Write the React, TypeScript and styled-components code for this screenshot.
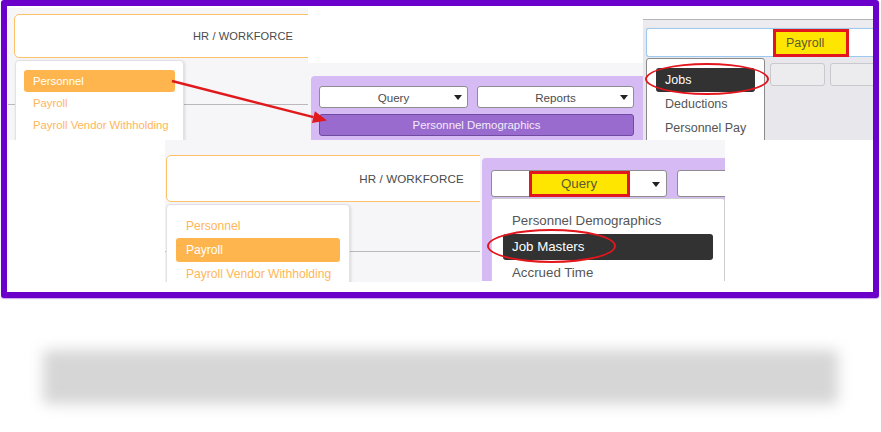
import React from "react";
import styled, { createGlobalStyle } from "styled-components";

const GlobalStyle = createGlobalStyle`
  html, body { margin: 0; padding: 0; background: #ffffff; }
  body { font-family: "Liberation Sans", Arial, sans-serif; }
  * { box-sizing: border-box; }
`;

const Page = styled.div`
  width: 881px;
  height: 432px;
  display: flex;
  flex-direction: column;
  padding-left: 1px;
`;

const Frame = styled.div`
  width: 878px;
  height: 298px;
  border: 6px solid #6a00c9;
  border-radius: 3px;
  background: #ffffff;
  box-shadow: 0 1px 1px rgba(106, 0, 201, 0.35);
`;

const Canvas = styled.div`
  position: relative;
  width: 100%;
  height: 100%;
  overflow: hidden;
`;

const Shot = styled.div<{ $x: number; $y: number; $w: number; $h: number; $bg?: string }>`
  position: absolute;
  left: ${(p) => p.$x}px;
  top: ${(p) => p.$y}px;
  width: ${(p) => p.$w}px;
  height: ${(p) => p.$h}px;
  background: ${(p) => p.$bg || "#f6f5f8"};
  overflow: hidden;
  display: flex;
  flex-direction: column;
`;

/* ---------- HR header / orange menu ---------- */

const HeaderBox = styled.div<{ $w: number; $h: number; $ml: number; $mt: number; $fs: number }>`
  flex: none;
  width: ${(p) => p.$w}px;
  height: ${(p) => p.$h}px;
  margin: ${(p) => p.$mt}px 0 0 ${(p) => p.$ml}px;
  border: 1.5px solid #ffc06a;
  border-radius: 5px;
  background: #ffffff;
  display: flex;
  align-items: center;
  justify-content: center;
  font-size: ${(p) => p.$fs}px;
  color: #4a4a4a;
  letter-spacing: 0.1px;
`;

const Rule = styled.div<{ $mt: number }>`
  flex: none;
  height: 1px;
  margin-top: ${(p) => p.$mt}px;
  background: #b9b8bc;
`;

const OrangeMenu = styled.div<{ $x: number; $y: number; $w: number; $pad: number }>`
  position: absolute;
  left: ${(p) => p.$x}px;
  top: ${(p) => p.$y}px;
  width: ${(p) => p.$w}px;
  height: 140px;
  background: #ffffff;
  border: 1px solid #e2e1e5;
  border-radius: 4px;
  box-shadow: 1px 1px 3px rgba(0, 0, 0, 0.12);
  padding: 9px ${(p) => p.$pad}px;
  display: flex;
  flex-direction: column;
`;

const OrangeItem = styled.div<{ $active?: boolean; $h: number; $fs: number; $pl: number }>`
  height: ${(p) => p.$h}px;
  line-height: ${(p) => p.$h}px;
  padding-left: ${(p) => p.$pl}px;
  border-radius: 3px;
  font-size: ${(p) => p.$fs}px;
  white-space: nowrap;
  color: ${(p) => (p.$active ? "#ffffff" : "#ffb657")};
  background: ${(p) => (p.$active ? "#ffb54d" : "transparent")};
`;

/* ---------- purple panel ---------- */

const WhiteTop = styled.div<{ $h: number }>`
  flex: none;
  height: ${(p) => p.$h}px;
  background: #ffffff;
`;

const GrayArea = styled.div<{ $pt: number; $pl: number }>`
  flex: 1;
  display: flex;
  flex-direction: column;
  padding: ${(p) => p.$pt}px 0 0 ${(p) => p.$pl}px;
  background: #f6f5f8;
`;

const Panel = styled.div<{ $pt: number; $pl: number }>`
  flex: 1;
  position: relative;
  background: #d6baf3;
  border-top-left-radius: 4px;
  padding: ${(p) => p.$pt}px 0 0 ${(p) => p.$pl}px;
  display: flex;
  flex-direction: column;
`;

const SelectRow = styled.div<{ $gap: number }>`
  display: flex;
  gap: ${(p) => p.$gap}px;
`;

const Select = styled.div<{ $w: number; $h: number; $fs: number }>`
  position: relative;
  flex: none;
  width: ${(p) => p.$w}px;
  height: ${(p) => p.$h}px;
  background: #ffffff;
  border: 1px solid #8d8d8f;
  border-radius: 3px;
  display: flex;
  align-items: center;
  justify-content: center;
  font-size: ${(p) => p.$fs}px;
  color: #4d4d4d;
`;

const Caret = styled.span<{ $r: number }>`
  position: absolute;
  right: ${(p) => p.$r}px;
  top: 50%;
  margin-top: -2px;
  width: 0;
  height: 0;
  border-left: 4px solid transparent;
  border-right: 4px solid transparent;
  border-top: 5px solid #222;
`;

const PurpleButton = styled.div`
  margin-top: 6px;
  width: 315px;
  height: 22px;
  background: #9a6bcf;
  border: 1px solid #6f4aa0;
  border-radius: 3px;
  display: flex;
  align-items: center;
  justify-content: center;
  font-size: 11.4px;
  color: #f3ecfb;
`;

const YellowMark = styled.div<{ $w: number; $h: number; $ml?: number; $fs: number; $center?: boolean }>`
  flex: none;
  width: ${(p) => p.$w}px;
  height: ${(p) => p.$h}px;
  margin-left: ${(p) => p.$ml || 0}px;
  background: #ffe600;
  border: 3px solid #e3161d;
  display: flex;
  align-items: center;
  justify-content: ${(p) => (p.$center ? "center" : "flex-start")};
  padding-left: ${(p) => (p.$center ? 0 : 10)}px;
  font-size: ${(p) => p.$fs}px;
  color: #5a5a30;
`;

/* ---------- dark menus ---------- */

const DarkMenu = styled.div<{ $x: number; $y: number; $w: number; $px: number; $border: string }>`
  position: absolute;
  left: ${(p) => p.$x}px;
  top: ${(p) => p.$y}px;
  width: ${(p) => p.$w}px;
  height: 140px;
  background: #ffffff;
  border: 1px solid ${(p) => p.$border};
  border-radius: 3px;
  padding: 9px ${(p) => p.$px}px;
  display: flex;
  flex-direction: column;
`;

const DarkItem = styled.div<{ $active?: boolean; $h: number; $fs: number }>`
  height: ${(p) => p.$h}px;
  line-height: ${(p) => p.$h}px;
  padding-left: 9px;
  border-radius: 3px;
  font-size: ${(p) => p.$fs}px;
  white-space: nowrap;
  color: ${(p) => (p.$active ? "#ffffff" : "#555555")};
  background: ${(p) => (p.$active ? "#323232" : "transparent")};
`;

const Ellipse = styled.div<{ $x: number; $y: number; $w: number; $h: number }>`
  position: absolute;
  left: ${(p) => p.$x}px;
  top: ${(p) => p.$y}px;
  width: ${(p) => p.$w}px;
  height: ${(p) => p.$h}px;
  border: 2.5px solid #e2161c;
  border-radius: 50%;
  pointer-events: none;
`;

/* ---------- payroll tab screenshot ---------- */

const TabStrip = styled.div`
  flex: none;
  height: 8px;
  margin-top: 11px;
  background: #ececf0;
  border-top: 1px solid #b4b4b8;
`;

const TabBody = styled.div`
  flex: 1;
  background: #e8e7eb;
  display: flex;
  flex-direction: column;
  padding-left: 3px;
`;

const InputBar = styled.div`
  flex: none;
  height: 29px;
  margin-top: 1px;
  background: #ffffff;
  border: 1px solid #9dc9ee;
  border-right: none;
  border-radius: 3px 0 0 3px;
  display: flex;
  align-items: center;
`;

const GhostRow = styled.div`
  display: flex;
  gap: 5px;
  margin: 6px 0 0 124px;
`;

const GhostButton = styled.div<{ $w: number }>`
  flex: none;
  width: ${(p) => p.$w}px;
  height: 23px;
  background: #ececef;
  border: 1px solid #c9c9cd;
  border-radius: 3px;
`;

const Arrow = styled.svg`
  position: absolute;
  left: 0;
  top: 0;
  width: 866px;
  height: 286px;
  pointer-events: none;
`;

const BlurBar = styled.div`
  margin: 52px 0 0 42px;
  width: 795px;
  height: 54px;
  background: #d6d6d6;
  border-radius: 4px;
  filter: blur(7px);
`;

export default function App() {
  return (
    <>
      <GlobalStyle />
      <Page>
        <Frame>
          <Canvas>
            {/* top-left: HR / WORKFORCE with Personnel selected */}
            <Shot $x={1} $y={2} $w={300} $h={132}>
              <HeaderBox $w={458} $h={44} $ml={6} $mt={6} $fs={11.1}>
                HR / WORKFORCE
              </HeaderBox>
              <Rule $mt={46} />
              <OrangeMenu $x={7} $y={52} $w={169} $pad={8}>
                <OrangeItem $active $h={22} $fs={11.3} $pl={9}>Personnel</OrangeItem>
                <OrangeItem $h={22} $fs={11.3} $pl={9}>Payroll</OrangeItem>
                <OrangeItem $h={23} $fs={11.3} $pl={9}>Payroll Vendor Withholding</OrangeItem>
              </OrangeMenu>
            </Shot>

            {/* top-middle: Query / Reports panel */}
            <Shot $x={301} $y={2} $w={335} $h={132}>
              <WhiteTop $h={55} />
              <GrayArea $pt={13} $pl={3}>
                <Panel $pt={10} $pl={8}>
                  <SelectRow $gap={9}>
                    <Select $w={149} $h={22} $fs={11.6}>
                      Query
                      <Caret $r={5} />
                    </Select>
                    <Select $w={157} $h={22} $fs={11.6}>
                      Reports
                      <Caret $r={5} />
                    </Select>
                  </SelectRow>
                  <PurpleButton>Personnel Demographics</PurpleButton>
                </Panel>
              </GrayArea>
            </Shot>

            {/* top-right: Payroll tab with Jobs */}
            <Shot $x={636} $y={2} $w={230} $h={132} $bg="#ffffff">
              <TabStrip />
              <TabBody>
                <InputBar>
                  <YellowMark $w={76} $h={28} $ml={126} $fs={12.5}>
                    Payroll
                  </YellowMark>
                </InputBar>
                <GhostRow>
                  <GhostButton $w={55} />
                  <GhostButton $w={60} />
                </GhostRow>
              </TabBody>
              <DarkMenu $x={3} $y={50} $w={119} $px={9} $border="#8a8a8c">
                <DarkItem $active $h={24} $fs={12.5}>Jobs</DarkItem>
                <DarkItem $h={24} $fs={12.5}>Deductions</DarkItem>
                <DarkItem $h={24} $fs={12.5}>Personnel Pay</DarkItem>
              </DarkMenu>
              <Ellipse $x={2} $y={55} $w={124} $h={32} />
            </Shot>

            {/* bottom-middle: HR / WORKFORCE with Payroll selected */}
            <Shot $x={158} $y={134} $w={315} $h={142}>
              <HeaderBox $w={491} $h={47} $ml={1} $mt={15} $fs={11.6}>
                HR / WORKFORCE
              </HeaderBox>
              <Rule $mt={49} />
              <OrangeMenu $x={1} $y={64} $w={184} $pad={9}>
                <OrangeItem $h={24} $fs={12.1} $pl={10}>Personnel</OrangeItem>
                <OrangeItem $active $h={24} $fs={12.1} $pl={10}>Payroll</OrangeItem>
                <OrangeItem $h={24} $fs={12.1} $pl={10}>Payroll Vendor Withholding</OrangeItem>
              </OrangeMenu>
            </Shot>

            {/* bottom-right: Query menu with Job Masters */}
            <Shot $x={473} $y={134} $w={245} $h={141}>
              <GrayArea $pt={18} $pl={2}>
                <Panel $pt={12} $pl={9}>
                  <SelectRow $gap={10}>
                    <Select $w={176} $h={27} $fs={13.3}>
                      <YellowMark $w={101} $h={26} $fs={13.3} $center>
                        Query
                      </YellowMark>
                      <Caret $r={6} />
                    </Select>
                    <Select $w={120} $h={27} $fs={13.3} />
                  </SelectRow>
                </Panel>
              </GrayArea>
              <DarkMenu $x={11} $y={58} $w={234} $px={11} $border="#cfcfd3">
                <DarkItem $h={26} $fs={13.3}>Personnel Demographics</DarkItem>
                <DarkItem $active $h={26} $fs={13.3}>Job Masters</DarkItem>
                <DarkItem $h={26} $fs={13.3}>Accrued Time</DarkItem>
              </DarkMenu>
              <Ellipse $x={7} $y={89} $w={129} $h={34} />
            </Shot>

            <Arrow viewBox="0 0 866 286">
              <line x1="165" y1="75" x2="306.4" y2="111.1" stroke="#e0191c" strokeWidth="2.5" />
              <polygon points="320,114.5 304.9,116.9 307.9,105.3" fill="#e0191c" />
            </Arrow>
          </Canvas>
        </Frame>
        <BlurBar />
      </Page>
    </>
  );
}
